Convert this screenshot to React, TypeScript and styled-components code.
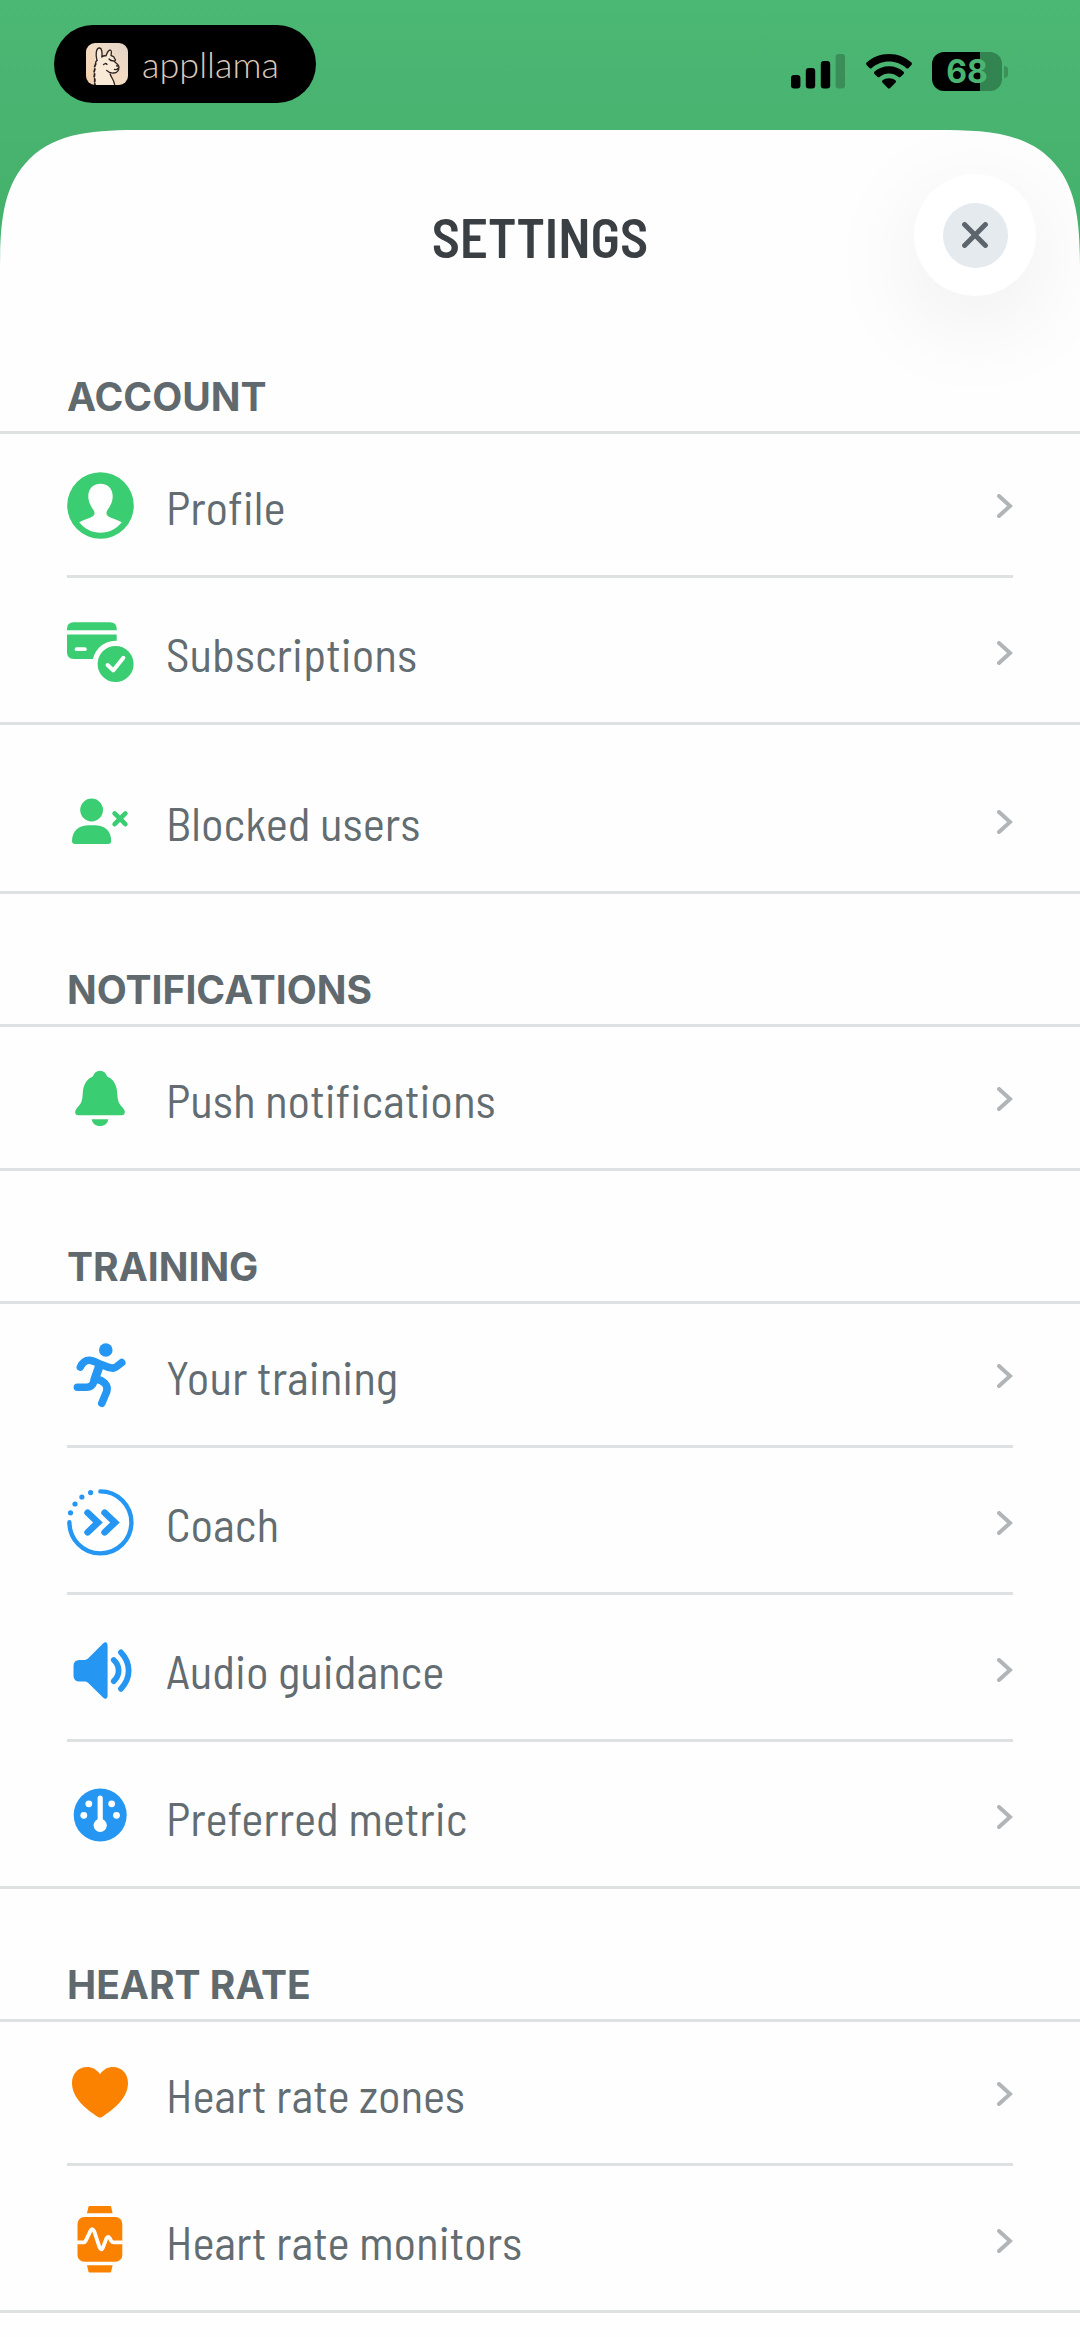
import React from "react";
import { createGlobalStyle, styled } from "styled-components";

const GREEN = "#3bcd72";
const BLUE = "#2597f3";
const ORANGE = "#fb8200";

const ProfileIcon = () => (
  <svg viewBox="0 0 67 67" fill="currentColor">
    <circle cx="33.5" cy="33.5" r="33.3" />
    <path
      fill="#fff"
      d="M33.5 11.7C26 11.7 21.3 17 21.3 24C21.3 30 24 34.5 26.5 38C28 40.5 28 43 25.5 44.5C22 46.5 16 48 12.2 50.3C17.5 57 25 60.7 33.5 60.7C42 60.7 49.5 57 54.8 50.3C51 48 45 46.5 41.5 44.5C39 43 39 40.5 40.5 38C43 34.5 45.7 30 45.7 24C45.7 17 41 11.7 33.5 11.7Z"
    />
  </svg>
);

const SubscriptionsIcon = () => (
  <svg viewBox="0 0 67 67" fill="currentColor">
    <path d="M0 11.3V10Q0 3.3 6.7 3.3H43Q49.7 3.3 49.7 10V11.3Z" />
    <path d="M0 15.5H49.7V40H6.7Q0 40 0 33.3Z" />
    <rect x="7.7" y="28.3" width="12" height="3.8" rx="1.9" fill="#fff" />
    <circle cx="48.6" cy="45" r="23.2" fill="#fefefe" />
    <circle cx="48.6" cy="45" r="18" />
    <path
      d="M40.6 46L46.2 51.4L56.4 38.8"
      fill="none"
      stroke="#fff"
      strokeWidth="4"
      strokeLinecap="round"
      strokeLinejoin="round"
    />
  </svg>
);

const BlockedUsersIcon = () => (
  <svg viewBox="0 0 67 67" fill="currentColor">
    <circle cx="24.6" cy="22" r="11.4" />
    <path d="M5 53C5 43 12 37.3 22 37.3H27.5C37.5 37.3 44.2 43 44.2 53Q44.2 56 41.2 56H8Q5 56 5 53Z" />
    <path
      d="M47.6 25.4L58.4 36.2M58.4 25.4L47.6 36.2"
      stroke="currentColor"
      strokeWidth="4.6"
      strokeLinecap="round"
    />
  </svg>
);

const BellIcon = () => (
  <svg viewBox="0 0 67 67" fill="currentColor">
    <path d="M33 5.7C29.4 5.7 27 8 25.8 11.5C19 14.5 16 20.5 15.7 29C15.4 36 14 39 10 43C8 45.5 8 47 8.3 48.3Q8.8 50.3 11 50.3H55Q57.2 50.3 57.7 48.3C58 47 58 45.5 56 43C52 39 50.6 36 50.3 29C50 20.5 47 14.5 40.2 11.5C39 8 36.6 5.7 33 5.7Z" />
    <path d="M24.7 54.2H41.3C40.6 58.6 37.6 61 33 61S25.4 58.6 24.7 54.2Z" />
  </svg>
);

const RunnerIcon = () => (
  <svg
    viewBox="0 0 67 67"
    fill="none"
    stroke="currentColor"
    strokeWidth="7.6"
    strokeLinecap="round"
    strokeLinejoin="round"
  >
    <circle cx="38.8" cy="8" r="6.8" fill="currentColor" stroke="none" />
    <path d="M13.4 25C15.5 20.5 18.5 18.2 22.5 18.3C25.5 18.4 29 20.3 35 22.8C39 24.5 41 25.6 45 26.1C48.5 26.5 50.5 23.5 54.7 20.6" />
    <path d="M32.4 24L27.6 37.6" strokeWidth="8.6" />
    <path d="M10.4 45.3H19.5C24 45.3 26 43 27.4 38.4" />
    <path d="M28.6 37C37 38.4 41.6 43.4 39.6 49.8L34.8 61.3" />
  </svg>
);

const CoachIcon = () => (
  <svg
    viewBox="0 0 67 67"
    fill="none"
    stroke="currentColor"
    strokeLinecap="round"
  >
    <path d="M33.4 2.4A31 31 0 1 1 2.4 33.2" strokeWidth="4.4" />
    <path
      d="M20.6 23.7L31 33.5L20.6 43.3M37.6 23.7L48 33.5L37.6 43.3"
      strokeWidth="6.6"
    />
    <g fill="currentColor" stroke="none">
      <circle cx="23.6" cy="3.6" r="2.6" />
      <circle cx="14.9" cy="8" r="2.6" />
      <circle cx="8" cy="15" r="2.6" />
      <circle cx="3.5" cy="23.8" r="2.6" />
    </g>
  </svg>
);

const SpeakerIcon = () => (
  <svg viewBox="0 0 67 67" fill="currentColor">
    <path d="M12.5 24H17.5Q19.5 24 21 22.6L36 7.6Q38 5.8 39.4 6.6Q40.6 7 40.6 9.4V59.6Q40.6 62 39.4 62.4Q38 63.2 36 61.4L21 46.8Q19.5 45.4 17.5 45.4H12.5Q6.5 45.4 6.5 39.4V30Q6.5 24 12.5 24Z" />
    <path
      d="M46.8 24C53.2 30 53.2 39.2 46.8 45.2M54 16.4C64.2 27 64.2 42.2 54 52.8"
      fill="none"
      stroke="currentColor"
      strokeWidth="5.8"
      strokeLinecap="round"
    />
  </svg>
);

const GaugeIcon = () => (
  <svg viewBox="0 0 67 67" fill="currentColor">
    <circle cx="33.2" cy="32" r="26.5" />
    <g fill="#fff">
      <rect x="30.6" y="12.6" width="5.2" height="28" rx="2.6" />
      <circle cx="33.2" cy="42.3" r="6.6" />
      <circle cx="21.8" cy="20.8" r="3.4" />
      <circle cx="44.7" cy="20.8" r="3.4" />
      <circle cx="16.8" cy="32.3" r="3.4" />
      <circle cx="49.5" cy="32.3" r="3.4" />
    </g>
  </svg>
);

const HeartIcon = () => (
  <svg viewBox="0 0 67 67" fill="currentColor">
    <path d="M33 14.3C36 9.5 41 7 46 7C54.5 7 61 13.5 61 23C61 38 47 49 35 57Q33 58.2 31 57C19 49 5 38 5 23C5 13.5 11.5 7 20 7C25 7 30 9.5 33 14.3Z" />
  </svg>
);

const WatchIcon = () => (
  <svg viewBox="0 0 67 67" fill="currentColor">
    <path d="M22.2 -1H43.4Q44 -1 44.2 0L45.6 6.3H20L21.4 0Q21.6 -1 22.2 -1Z" />
    <rect x="10.5" y="10" width="44.8" height="44.8" rx="6.8" />
    <path d="M20 58.3H45.6L44.2 64.6Q44 65.4 43.4 65.4H22.2Q21.6 65.4 21.4 64.6Z" />
    <path
      d="M10 35.3H16.4Q18 35.3 18.8 33.6L23.6 23.6Q25.6 20.6 27.2 24.2L32.4 40Q34.2 44.4 36 40.4L39.4 31.4Q41 28.4 42.8 31.2L44.2 33.8Q45 35.3 46.8 35.3H55.6"
      fill="none"
      stroke="#fff"
      strokeWidth="3.8"
      strokeLinejoin="round"
    />
  </svg>
);

const LlamaMark = () => (
  <svg width="42" height="42" viewBox="0 0 42 42" aria-hidden="true">
    <defs>
      <linearGradient id="llama-tile" x1="0" y1="1" x2="1" y2="0">
        <stop offset="0" stopColor="#f1d0aa" />
        <stop offset="0.5" stopColor="#f3dcc4" />
        <stop offset="1" stopColor="#e3d3c8" />
      </linearGradient>
    </defs>
    <rect width="42" height="42" rx="9" fill="url(#llama-tile)" />
    <path
      d="M11 17.4C9.4 12 10 5.6 13 5C16 4.6 16.4 10 15.8 14C17 12.8 18.6 12.6 20 12.8C21 10 23 7 24.4 7C25.8 7.4 25.4 10.6 25 12.6C27.4 13 28.6 14.4 28.4 15.6C30 16 29.8 17.4 28.4 18.2C29 20 33 21.2 33 24C33 27.4 31 30 27.6 30C26 30.2 24.6 29.8 23.6 29C24 33 27.4 36 28.4 42H9C8 39 9.4 37.6 8.6 35.6C7.6 33.6 9 32 8.4 30C7.6 28 9.2 27 8.8 25.2C8.2 23 9.6 22.4 9.6 21C9.4 19.4 9.8 18.2 11 17.4Z"
      fill="#f9ead8"
    />
    <g
      fill="none"
      stroke="#2b211f"
      strokeWidth="1.3"
      strokeLinecap="round"
      strokeLinejoin="round"
    >
      <path d="M11 17.4C9.4 12 10 5.6 13 5C16 4.6 16.4 10 15.8 14C17 12.8 18.6 12.6 20 12.8C21 10 23 7 24.4 7C25.8 7.4 25.4 10.6 25 12.6C27.4 13 28.6 14.4 28.4 15.6C30 16 29.8 17.4 28.4 18.2C26 18 24 17.4 23 16" />
      <path d="M28.4 18.2C29 20 33 21.2 33 24C33 27.4 31 30 27.6 30C25 30.2 22 29 20.6 27.4M28.4 26.4C29.8 27 31.4 26.2 32 25.2" />
      <path d="M17.6 21.6C18.4 20.2 20.2 20.2 21 21.4M30.4 22.8L31.8 23" />
      <path d="M11 17.4C9.8 18.2 9.4 19.4 9.6 21" />
      <path
        d="M9.6 21C9.6 22.4 8.2 23 8.8 25.2C9.2 27 7.6 28 8.4 30C9 32 7.6 33.6 8.6 35.6C9.4 37.6 8 39 9 41.4"
        strokeWidth="1.8"
        strokeDasharray="3 2"
      />
      <path d="M24.2 31C24.8 34 27.8 36.4 28.6 41.4" />
    </g>
  </svg>
);

const SignalIcon = () => (
  <svg width="54" height="35" viewBox="0 0 54 35" aria-hidden="true">
    <rect x="0" y="21" width="9.4" height="13.6" rx="3" />
    <rect x="14.8" y="14" width="9.4" height="20.6" rx="3" />
    <rect x="29.8" y="7" width="9.4" height="27.6" rx="3" />
    <rect x="44.6" y="0" width="9.4" height="34.6" rx="3" opacity="0.22" />
  </svg>
);

const WifiIcon = () => (
  <svg width="46" height="35" viewBox="0 0 46 35" aria-hidden="true">
    <path d="M23 0C14.2 0 6.4 3.2 0.6 8.6Q-0.4 9.8 0.6 11L3.4 14Q4.6 15 5.8 14C10.4 9.8 16.4 7.4 23 7.4S35.6 9.8 40.2 14Q41.4 15 42.6 14L45.4 11Q46.4 9.8 45.4 8.6C39.6 3.2 31.8 0 23 0Z" />
    <path d="M23 12.2C17.4 12.2 12.4 14.2 8.6 17.6Q7.4 18.8 8.4 20L11.4 22.8Q12.6 23.8 13.8 22.8C16.4 20.6 19.6 19.4 23 19.4S29.6 20.6 32.2 22.8Q33.4 23.8 34.6 22.8L37.6 20Q38.6 18.8 37.4 17.6C33.6 14.2 28.6 12.2 23 12.2Z" />
    <path d="M23 24.2C20.4 24.2 18.2 25 16.4 26.4Q15.4 27.4 16.4 28.4L21.8 34Q23 35 24.2 34L29.6 28.4Q30.6 27.4 29.6 26.4C27.8 25 25.6 24.2 23 24.2Z" />
  </svg>
);

type Item = { label: string; icon: React.FC; href: string };
type Section = { title: string; color: string; groups: Item[][] };

const sections: Section[] = [
  {
    title: "Account",
    color: GREEN,
    groups: [
      [
        { label: "Profile", icon: ProfileIcon, href: "#profile" },
        {
          label: "Subscriptions",
          icon: SubscriptionsIcon,
          href: "#subscriptions",
        },
      ],
      [{ label: "Blocked users", icon: BlockedUsersIcon, href: "#blocked" }],
    ],
  },
  {
    title: "Notifications",
    color: GREEN,
    groups: [[{ label: "Push notifications", icon: BellIcon, href: "#push" }]],
  },
  {
    title: "Training",
    color: BLUE,
    groups: [
      [
        { label: "Your training", icon: RunnerIcon, href: "#training" },
        { label: "Coach", icon: CoachIcon, href: "#coach" },
        { label: "Audio guidance", icon: SpeakerIcon, href: "#audio" },
        { label: "Preferred metric", icon: GaugeIcon, href: "#metric" },
      ],
    ],
  },
  {
    title: "Heart rate",
    color: ORANGE,
    groups: [
      [
        { label: "Heart rate zones", icon: HeartIcon, href: "#zones" },
        { label: "Heart rate monitors", icon: WatchIcon, href: "#monitors" },
      ],
    ],
  },
];

const SettingsRow: React.FC<{ item: Item; color: string }> = ({
  item,
  color,
}) => {
  const Icon = item.icon;

  return (
    <Row>
      <RowLink href={item.href}>
        <IconBox color={color} aria-hidden="true">
          <Icon />
        </IconBox>
        <Label>{item.label}</Label>
        <Chevron viewBox="0 0 16 24" aria-hidden="true">
          <path d="M2 2L13 12L2 22" />
        </Chevron>
      </RowLink>
    </Row>
  );
};

export default function App() {
  return (
    <>
      <GlobalStyle />
      <Screen>
        <StatusBar>
          <BrandPill>
            <LlamaMark />
            <span>appllama</span>
          </BrandPill>
          <StatusIcons>
            <SignalIcon />
            <WifiIcon />
            <Battery>
              <BatteryBody>68</BatteryBody>
              <BatteryCap />
            </Battery>
          </StatusIcons>
        </StatusBar>

        <Sheet>
          <Header>
            <Title>SETTINGS</Title>
            <CloseButton type="button" aria-label="Close">
              <span>
                <svg viewBox="0 0 26 26" aria-hidden="true">
                  <path d="M2.6 2.6L23.4 23.4M23.4 2.6L2.6 23.4" />
                </svg>
              </span>
            </CloseButton>
          </Header>

          {sections.map((section) => (
            <section key={section.title}>
              <Heading>{section.title}</Heading>
              {section.groups.map((group) => (
                <Group key={group[0].label}>
                  {group.map((item) => (
                    <SettingsRow
                      key={item.label}
                      item={item}
                      color={section.color}
                    />
                  ))}
                </Group>
              ))}
            </section>
          ))}
        </Sheet>
      </Screen>
    </>
  );
}

const GlobalStyle = createGlobalStyle`
  *, *::before, *::after {
    box-sizing: border-box;
  }

  body {
    margin: 0;
    background: #fefefe;
    font-family: "Barlow Semi Condensed", "Roboto Condensed", Roboto, sans-serif;
  }
`;

const Screen = styled.div`
  display: flex;
  flex-direction: column;
  min-height: 100vh;
  background: linear-gradient(#4bb874 0, #49b370 130px, #40b268 280px);
`;

const StatusBar = styled.div`
  display: flex;
  justify-content: space-between;
  padding: 25px 72px 27px 54px;
`;

const BrandPill = styled.div`
  display: flex;
  align-items: center;
  gap: 14px;
  width: 262px;
  height: 78px;
  padding-left: 32px;
  border-radius: 39px;
  background: #000;

  > span {
    color: #dcc8ba;
    font-family: Lato, sans-serif;
    font-size: 36px;
    font-weight: 300;
    line-height: 40px;
  }
`;

const StatusIcons = styled.div`
  display: flex;
  align-items: center;
  align-self: flex-end;
  gap: 20px;
  padding-bottom: 12px;

  > svg:first-child {
    margin-right: 1px;
  }
`;

const Battery = styled.div`
  display: flex;
  align-items: center;
  gap: 2px;
`;

const BatteryBody = styled.div`
  width: 70px;
  height: 39px;
  border-radius: 12px;
  background: linear-gradient(90deg, #000 68%, #328450 68%);
  color: #4ab572;
  font-family: Inter, sans-serif;
  font-size: 32px;
  font-weight: 700;
  line-height: 39px;
  text-align: center;
`;

const BatteryCap = styled.div`
  width: 4px;
  height: 12px;
  border-radius: 0 4px 4px 0;
  background: #3a9259;
`;

const Sheet = styled.main`
  flex: 1;
  overflow: hidden;
  border-radius: 104px 104px 0 0;
  background: #fefefe;

  @supports (corner-shape: squircle) {
    border-radius: 143px 143px 0 0;
    corner-shape: superellipse(1.6);
  }
`;

const Header = styled.header`
  display: grid;
  grid-template-columns: 122px 1fr 122px;
  align-items: center;
  padding: 44px 44px 5px;
`;

const Title = styled.h1`
  grid-column: 2;
  margin: 0;
  padding-top: 2px;
  color: #3a3f43;
  font-size: 55px;
  font-weight: 600;
  line-height: 64px;
  text-align: center;
`;

const CloseButton = styled.button`
  display: flex;
  align-items: center;
  justify-content: center;
  width: 122px;
  height: 122px;
  padding: 0;
  border: 0;
  border-radius: 50%;
  background: #fff;
  box-shadow: 0 24px 100px rgba(0, 0, 0, 0.08);
  cursor: pointer;

  > span {
    display: flex;
    align-items: center;
    justify-content: center;
    width: 65px;
    height: 65px;
    border-radius: 50%;
    background: #e5eaef;
  }

  svg {
    width: 26px;
    height: 26px;
    fill: none;
    stroke: #5c656c;
    stroke-width: 5;
    stroke-linecap: round;
  }
`;

const Heading = styled.h2`
  margin: 0;
  padding: 74px 67px 12px;
  border-bottom: 3px solid #dee1e2;
  color: #5f696e;
  font-family: Inter, sans-serif;
  font-size: 39px;
  font-weight: 700;
  line-height: 44px;
  text-transform: uppercase;
`;

const Row = styled.li`
  margin: 0 67px;
  border-bottom: 3px solid #dee1e2;

  &:last-child {
    margin: 0;
    padding: 0 67px;
  }
`;

const Group = styled.ul`
  margin: 0;
  padding: 0;
  list-style: none;

  ${Heading} + & {
    margin-top: -3px;
  }

  & + & {
    padding-top: 22px;
  }
`;

const RowLink = styled.a`
  display: flex;
  align-items: center;
  height: 144px;
  padding-top: 5px;
  color: #626c71;
  text-decoration: none;
`;

const IconBox = styled.span<{ color: string }>`
  width: 67px;
  height: 67px;
  margin-right: 32px;
  color: ${(props) => props.color};

  > svg {
    display: block;
    width: 100%;
    height: 100%;
    overflow: visible;
  }
`;

const Label = styled.span`
  flex: 1;
  font-size: 47px;
  line-height: 56px;
`;

const Chevron = styled.svg`
  width: 16px;
  height: 24px;
  fill: none;
  stroke: #b1b5b7;
  stroke-width: 4;
  stroke-linecap: round;
`;
